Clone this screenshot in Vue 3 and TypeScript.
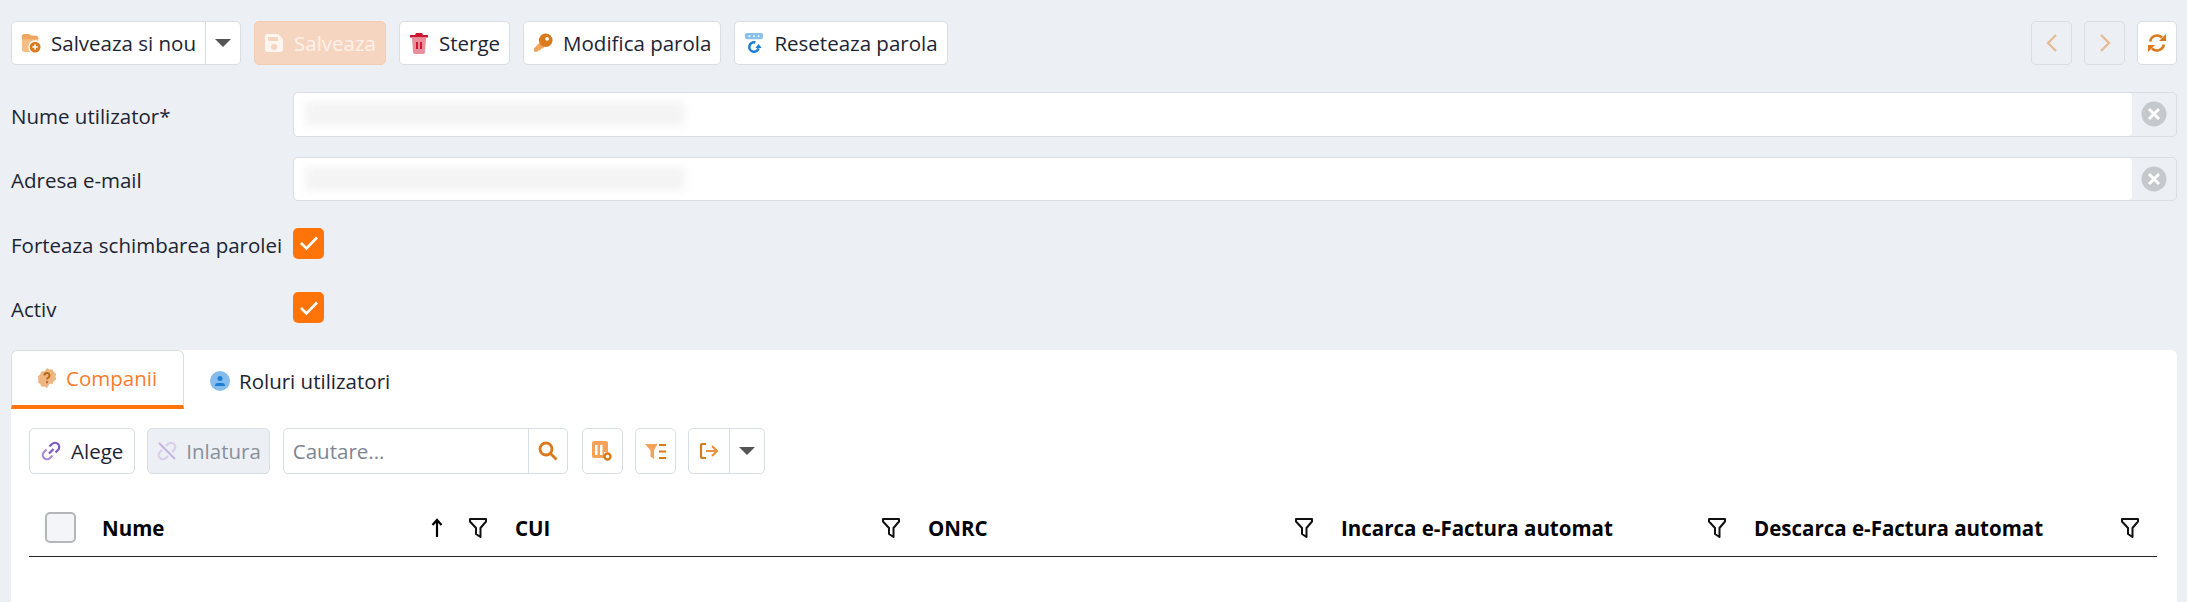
<script setup lang="ts">
const columns = [
  { name: 'Nume', sorted: true },
  { name: 'CUI', sorted: false },
  { name: 'ONRC', sorted: false },
  { name: 'Incarca e-Factura automat', sorted: false },
  { name: 'Descarca e-Factura automat', sorted: false }
]
</script>

<template>
  <div class="page">
    <div class="toolbar">
      <div class="btn split">
        <span class="btn-main">
          <svg class="icon" viewBox="0 0 22 22">
            <path d="M1 4a3 3 0 0 1 3-3h5l2 2h5a3 3 0 0 1 3 3v12a3 3 0 0 1-3 3H4a3 3 0 0 1-3-3z" fill="#f6bd84" />
            <path d="M1 4a3 3 0 0 1 3-3h5l2 2h5a3 3 0 0 1 3 3v1H1z" fill="#eea661" />
            <circle cx="15.500" cy="15.500" r="7.500" fill="#fff" />
            <circle cx="15.500" cy="15.500" r="6" fill="#d97b1c" />
            <path d="M15.500 12.500v6M12.500 15.500h6" stroke="#fff" stroke-width="1.600" />
          </svg>
          Salveaza si nou
        </span>
        <span class="caret-box"><i class="caret"></i></span>
      </div>
      <div class="btn btn-save">
        <svg class="icon" viewBox="0 0 20 20">
          <path fill-rule="evenodd" d="M3 1h11l5 5v10a3 3 0 0 1-3 3H3a2 2 0 0 1-2-2V3a2 2 0 0 1 2-2zm1 3v4h10V4zm6 7a3 3 0 1 0 0 6 3 3 0 0 0 0-6z" fill="#fff" opacity=".75" />
        </svg>
        Salveaza
      </div>
      <div class="btn">
        <svg class="icon" viewBox="0 0 20 22">
          <path d="M3 6h14l-1 14a2 2 0 0 1-2 2H6a2 2 0 0 1-2-2z" fill="#e98f9b" />
          <path d="M1 3h5l1-2h6l1 2h5v2.400H1z" fill="#cc1530" />
          <path d="M7 10h2v7H7zM11 10h2v7h-2z" fill="#cc1530" />
        </svg>
        Sterge
      </div>
      <div class="btn">
        <svg class="icon" viewBox="0 0 22 22">
          <path d="M9 9 1 17v3.500h4l1-1.500h2l1-2h2l2-3z" fill="#f3a257" />
          <circle cx="14" cy="8" r="7.500" fill="#d97b1c" />
          <circle cx="15.500" cy="6.500" r="2" fill="#fff" />
        </svg>
        Modifica parola
      </div>
      <div class="btn">
        <svg class="icon" viewBox="0 0 22 22">
          <rect x="1" y="0" width="20" height="7" rx="2.500" fill="#8cc0ec" />
          <circle cx="6" cy="3.500" r="1" fill="#fff" />
          <circle cx="11" cy="3.500" r="1" fill="#fff" />
          <circle cx="16" cy="3.500" r="1" fill="#fff" />
          <path d="M12.500 10.400A5.200 5.200 0 1 0 16 17" fill="none" stroke="#1a7fd6" stroke-width="2.800" />
          <path d="M12.500 16.500h7L16 12z" fill="#1a7fd6" />
        </svg>
        Reseteaza parola
      </div>
      <div class="nav">
        <div class="btn btn-square btn-off">
          <svg width="12" height="20" viewBox="0 0 12 20"><path d="M10 2 2 10l8 8" fill="none" stroke="#e6bc94" stroke-width="2.400" /></svg>
        </div>
        <div class="btn btn-square btn-off">
          <svg width="12" height="20" viewBox="0 0 12 20"><path d="m2 2 8 8-8 8" fill="none" stroke="#e6bc94" stroke-width="2.400" /></svg>
        </div>
        <div class="btn btn-square btn-refresh">
          <svg width="20" height="20" viewBox="0 0 20 20">
            <path d="M3.200 8.500A7 7 0 0 1 15 4.500" fill="none" stroke="#d97b1c" stroke-width="2.600" />
            <path d="M19 1v7h-7z" fill="#d97b1c" />
            <path d="M16.800 11.500A7 7 0 0 1 5 15.500" fill="none" stroke="#d97b1c" stroke-width="2.600" />
            <path d="M1 19v-7h7z" fill="#d97b1c" />
          </svg>
        </div>
      </div>
    </div>

    <div class="form">
      <div class="row">
        <label>Nume utilizator*</label>
        <div class="input">
          <div class="input-field"><span class="blurred"></span></div>
          <div class="clear"><svg width="26" height="26" viewBox="0 0 26 26"><circle cx="13" cy="13" r="12.500" fill="#c5c8cc" /><path d="m8 8 10 10M18 8 8 18" stroke="#fff" stroke-width="3" /></svg></div>
        </div>
      </div>
      <div class="row">
        <label>Adresa e-mail</label>
        <div class="input">
          <div class="input-field"><span class="blurred"></span></div>
          <div class="clear"><svg width="26" height="26" viewBox="0 0 26 26"><circle cx="13" cy="13" r="12.500" fill="#c5c8cc" /><path d="m8 8 10 10M18 8 8 18" stroke="#fff" stroke-width="3" /></svg></div>
        </div>
      </div>
      <div class="row">
        <label>Forteaza schimbarea parolei</label>
        <div class="check"><svg width="20" height="16" viewBox="0 0 20 16"><path d="m2 8 5.500 5.500L18 2.500" fill="none" stroke="#fff" stroke-width="2.600" /></svg></div>
      </div>
      <div class="row">
        <label>Activ</label>
        <div class="check"><svg width="20" height="16" viewBox="0 0 20 16"><path d="m2 8 5.500 5.500L18 2.500" fill="none" stroke="#fff" stroke-width="2.600" /></svg></div>
      </div>
    </div>

    <div class="panel">
      <div class="tabs">
        <div class="tab tab-active">
          <svg class="tab-icon" viewBox="0 0 20 20">
            <path d="M10 0l2.500 1.500 3-.2 1.200 2.700 2.500 1.700-.7 2.900.7 2.900-2.500 1.700-1.200 2.700-3-.2L10 20l-2.500-1.500-3 .2-1.200-2.700L.8 14.300l.7-2.900-.7-2.900L3.300 6l1.200-2.700 3 .2z" fill="#f0b681" />
            <path d="M7.500 7.500a2.500 2.500 0 1 1 3.500 2.300c-.7.4-1 .8-1 1.700M10 13.200v2" fill="none" stroke="#b86a1c" stroke-width="2" />
          </svg>
          Companii
        </div>
        <div class="tab">
          <svg class="tab-icon" viewBox="0 0 20 20">
            <circle cx="10" cy="10" r="10" fill="#85bcec" />
            <circle cx="10" cy="7.500" r="2.500" fill="#1a7fd6" />
            <path d="M5 15a3 3 0 0 1 3-3h4a3 3 0 0 1 3 3z" fill="#1a7fd6" />
          </svg>
          Roluri utilizatori
        </div>
      </div>

      <div class="grid-toolbar">
        <div class="btn btn-pick">
          <svg class="icon-sm" viewBox="0 0 20 20">
            <path d="M8 12.500 12.500 8M8.500 5.500 11 3a4 4 0 0 1 6 6l-2.500 2.500" fill="none" stroke="#7d57c2" stroke-width="2.200" />
            <path d="M11.500 14.500 9 17a4 4 0 0 1-6-6l2.500-2.500" fill="none" stroke="#a98ad8" stroke-width="2.200" />
          </svg>
          Alege
        </div>
        <div class="btn btn-off btn-remove">
          <svg class="icon-sm" viewBox="0 0 20 20">
            <path d="M2 2l16 16" stroke="#c4b3e2" stroke-width="2" />
            <path d="M9 5l2-2a4 4 0 0 1 6 6l-2 2M11 15l-2 2a4 4 0 0 1-6-6l2-2" fill="none" stroke="#d9cdec" stroke-width="2.200" />
          </svg>
          Inlatura
        </div>
        <div class="search">
          <span class="search-text">Cautare...</span>
          <span class="search-btn">
            <svg width="20" height="20" viewBox="0 0 20 20">
              <circle cx="8" cy="8" r="6" fill="none" stroke="#d97b1c" stroke-width="2.800" />
              <path d="m12.500 12.500 6 6" stroke="#d97b1c" stroke-width="2.800" />
            </svg>
          </span>
        </div>
        <div class="btn btn-square btn-white">
          <svg width="20" height="20" viewBox="0 0 20 20">
            <path d="M0 2a2 2 0 0 1 2-2h12a2 2 0 0 1 2 2v9h-4v6H2a2 2 0 0 1-2-2z" fill="#f3a257" />
            <path d="M3 4h2.500v10H3zM8 4h2.500v10H8z" fill="#fff" />
            <circle cx="15.500" cy="15.500" r="3" fill="none" stroke="#d97b1c" stroke-width="2.400" />
          </svg>
        </div>
        <div class="btn btn-square btn-white">
          <svg width="21" height="17" viewBox="0 0 21 17">
            <path d="M0 1h12.500L9 7.500V16l-3.500-2.500v-6z" fill="#f3a257" />
            <path d="M14 2h7M14 8.500h7M14 15h7" stroke="#d97b1c" stroke-width="2.200" />
          </svg>
        </div>
        <div class="btn split">
          <span class="export">
            <svg width="20" height="18" viewBox="0 0 20 18">
              <path d="M7 2H3a1 1 0 0 0-1 1v12a1 1 0 0 0 1 1h4" fill="none" stroke="#d97b1c" stroke-width="2.200" />
              <path d="M7 9h11M13 4l5 5-5 5" fill="none" stroke="#e8913f" stroke-width="2.200" />
            </svg>
          </span>
          <span class="caret-box"><i class="caret"></i></span>
        </div>
      </div>

      <div class="table-head">
        <div class="select-col"><span class="select-box"></span></div>
        <div v-for="col in columns" :key="col.name" class="col">
          <span class="col-name">{{ col.name }}</span>
          <svg v-if="col.sorted" class="sort" width="12" height="20" viewBox="0 0 12 20">
            <path d="M6 19V3M1.500 7 6 2l4.500 5" fill="none" stroke="#000" stroke-width="2.200" />
          </svg>
          <svg class="filter" width="20" height="22" viewBox="0 0 20 22">
            <path d="M2 2h16v2.500L12.500 11v9L8 17v-6L2 4.500z" fill="none" stroke="#111" stroke-width="2" stroke-linejoin="round" />
          </svg>
        </div>
      </div>
    </div>
  </div>
</template>

<style>
html,
body {
  margin: 0;
  background: #eceff4;
}
</style>

<style scoped>
.page {
  box-sizing: border-box;
  height: 602px;
  overflow: hidden;
  padding: 21px 10px 0 11px;
  background: #eceff4;
  font-family: "Open Sans", "Noto Sans", sans-serif;
  font-size: 20.500px;
  color: #1d2433;
}

.toolbar {
  display: flex;
  gap: 13px;
}

.btn {
  box-sizing: border-box;
  display: flex;
  align-items: center;
  height: 44px;
  padding: 0 9px;
  gap: 10px;
  background: #fff;
  border: 1px solid #d9dde4;
  border-radius: 5px;
  white-space: nowrap;
}

.icon {
  width: 20px;
  height: 22px;
}

.icon-sm {
  width: 20px;
  height: 20px;
}

.split {
  padding: 0;
  gap: 0;
}

.btn-main {
  display: flex;
  align-items: center;
  gap: 10px;
  padding: 0 9px;
}

.caret-box {
  display: flex;
  align-items: center;
  justify-content: center;
  width: 34px;
  height: 100%;
  border-left: 1px solid #d9dde4;
}

.caret {
  width: 0;
  height: 0;
  border-left: 8px solid transparent;
  border-right: 8px solid transparent;
  border-top: 8px solid #555;
}

.btn-save {
  background: #f6d5c0;
  border-color: #f3cdb2;
  color: #fdf1e9;
}

.nav {
  display: flex;
  gap: 12px;
  margin-left: auto;
}

.btn-square {
  width: 41px;
  padding: 0;
  justify-content: center;
}

.btn-off {
  background: #eceff4;
}

.btn-refresh {
  width: 40px;
}

.btn-white {
  background: #fff;
}

.form {
  display: flex;
  flex-direction: column;
  gap: 20px;
  margin-top: 27px;
}

.row {
  display: flex;
  align-items: center;
  height: 44.500px;
}

.row label {
  width: 282px;
  flex: none;
  padding-top: 3px;
  white-space: nowrap;
}

.input {
  box-sizing: border-box;
  flex: 1;
  display: flex;
  height: 100%;
  border: 1px solid #d9dde4;
  border-radius: 5px;
  overflow: hidden;
}

.input-field {
  flex: 1;
  display: flex;
  align-items: center;
  padding-left: 11px;
  background: #fff;
  border-radius: 4px;
}

.blurred {
  width: 380px;
  height: 24px;
  background: #f4f4f4;
  filter: blur(4px);
}

.clear {
  display: flex;
  align-items: center;
  justify-content: center;
  width: 44px;
}

.check {
  display: flex;
  align-items: center;
  justify-content: center;
  width: 31px;
  height: 31px;
  background: #ff7409;
  border-radius: 5px;
}

.panel {
  height: 260px;
  margin-top: 20px;
  background: #fff;
  border-radius: 6px 6px 0 0;
}

.tabs {
  display: flex;
  height: 59px;
}

.tab {
  box-sizing: border-box;
  display: flex;
  align-items: center;
  gap: 9px;
  padding: 2px 26px 0;
  height: 100%;
}

.tab-active {
  width: 173px;
  color: #fb7c2c;
  border: 1px solid #d9dde4;
  border-bottom: 4px solid #ff7409;
  border-radius: 6px 6px 0 0;
  padding: 0 25px;
}

.tab-icon {
  width: 20px;
  height: 20px;
}

.grid-toolbar {
  display: flex;
  gap: 12px;
  margin-top: 19px;
  padding-left: 18px;
}

.grid-toolbar .btn {
  height: 46px;
}

.grid-toolbar .btn-square {
  padding: 0;
}

.btn-pick {
  padding: 0 11px;
}

.btn-remove {
  gap: 9px;
  padding: 0 8px 0 9px;
  color: #8a8f98;
}

.search {
  box-sizing: border-box;
  display: flex;
  align-items: center;
  width: 285px;
  height: 46px;
  margin: 0 2px 0 1px;
  border: 1px solid #d9dde4;
  border-radius: 5px;
}

.search-text {
  flex: 1;
  padding-left: 9px;
  color: #7c8594;
}

.search-btn {
  display: flex;
  align-items: center;
  justify-content: center;
  width: 38px;
  height: 100%;
  border-left: 1px solid #d9dde4;
}

.export {
  display: flex;
  align-items: center;
  justify-content: center;
  width: 40px;
}

.table-head {
  display: flex;
  align-items: center;
  box-sizing: border-box;
  height: 83px;
  padding: 38px 0 13px;
  margin: 0 20px 0 18px;
  border-bottom: 1px solid #222;
}

.select-col {
  display: flex;
  align-items: center;
  width: 61px;
  padding-left: 16px;
  box-sizing: border-box;
  flex: none;
}

.select-box {
  box-sizing: border-box;
  width: 31px;
  height: 31px;
  background: #f3f5f8;
  border: 2px solid #b4b6ba;
  border-radius: 5px;
}

.col {
  box-sizing: border-box;
  flex: none;
  width: 413px;
  display: flex;
  align-items: center;
  gap: 25px;
  padding: 0 15px 0 12px;
  color: #000;
  font-weight: 700;
  font-size: 20.500px;
}

.col-name {
  flex: 1;
  padding-top: 1px;
  white-space: nowrap;
}

.sort,
.filter {
  flex: none;
}
</style>
